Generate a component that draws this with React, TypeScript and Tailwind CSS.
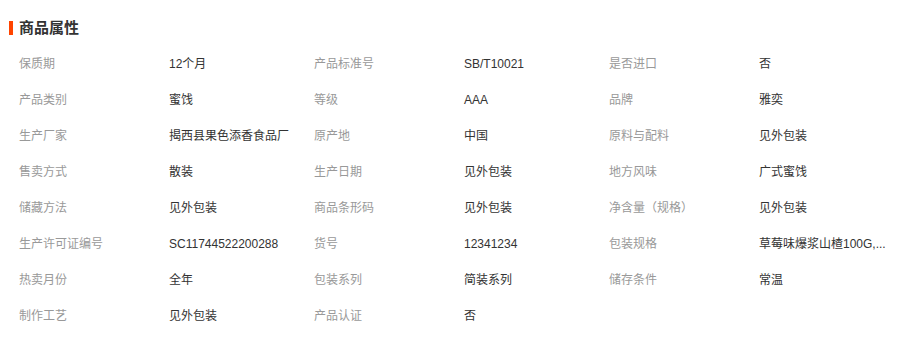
import React from "react";

const rows: [string, string][][] = [
  [["保质期", "12个月"], ["产品标准号", "SB/T10021"], ["是否进口", "否"]],
  [["产品类别", "蜜饯"], ["等级", "AAA"], ["品牌", "雅奕"]],
  [["生产厂家", "揭西县果色添香食品厂"], ["原产地", "中国"], ["原料与配料", "见外包装"]],
  [["售卖方式", "散装"], ["生产日期", "见外包装"], ["地方风味", "广式蜜饯"]],
  [["储藏方法", "见外包装"], ["商品条形码", "见外包装"], ["净含量（规格）", "见外包装"]],
  [["生产许可证编号", "SC11744522200288"], ["货号", "12341234"], ["包装规格", "草莓味爆浆山楂100G,..."]],
  [["热卖月份", "全年"], ["包装系列", "简装系列"], ["储存条件", "常温"]],
  [["制作工艺", "见外包装"], ["产品认证", "否"]],
];

export default function App() {
  return (
    <div
      className="w-[921px] h-[346px] bg-white"
      style={{ fontFamily: '"Liberation Sans", "Noto Sans CJK SC", sans-serif' }}
    >
      <div className="flex items-center pt-[20px] pl-[9px] h-[35px]">
        <div className="w-[4px] h-[14px] bg-[#ff4400]" />
        <div className="ml-[6px] text-[15px] font-bold text-[#333] leading-[15px]">商品属性</div>
      </div>
      <div className="pl-[19px] pt-[11px]">
        {rows.map((row, i) => (
          <div key={i} className="flex h-[36px] items-center text-[12px] leading-[12px]">
            {row.map(([k, v], j) => (
              <div key={j} className="flex">
                <div className="w-[150px] text-[#999] whitespace-nowrap">{k}</div>
                <div className="w-[145px] text-[#333] whitespace-nowrap">{v}</div>
              </div>
            ))}
          </div>
        ))}
      </div>
    </div>
  );
}
